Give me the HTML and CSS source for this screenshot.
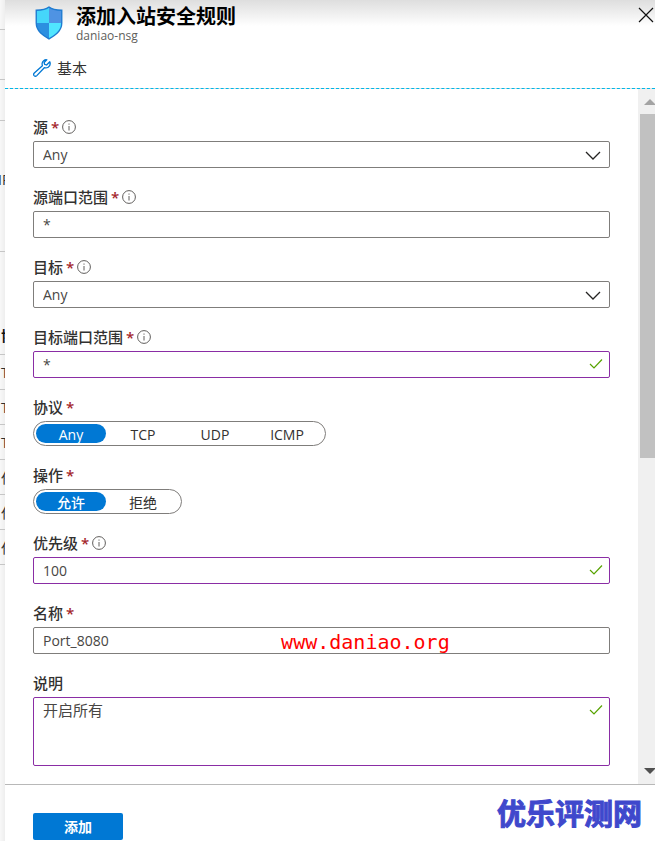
FILE: index.html
```html
<!DOCTYPE html>
<html lang="zh-CN">
<head>
<meta charset="utf-8">
<meta name="viewport" content="width=device-width, initial-scale=1">
<title>添加入站安全规则</title>
<link rel="stylesheet" href="styles.css">
</head>
<body>
<svg class="sprite" aria-hidden="true">
  <symbol id="info" viewBox="0 0 14 14"><circle cx="7" cy="7" r="6.4" fill="none" stroke="#605e5c"/><path d="M7 6v4.5M7 3.5v1.2" stroke="#605e5c" fill="none"/></symbol>
  <symbol id="chevron" viewBox="0 0 16 9"><path d="M1 1l7 7 7-7" fill="none" stroke="#252423" stroke-width="1.3"/></symbol>
  <symbol id="check" viewBox="0 0 14 10"><path d="M1 5l4 4 8-8.5" fill="none" stroke="#57a300" stroke-width="1.2"/></symbol>
</svg>
<div class="shell">
  <aside class="behind" aria-hidden="true">
    <div class="line short"></div>
    <div class="line medium"></div>
    <div class="line small"></div>
    <div class="line tall"><span class="clip">IP</span></div>
    <div class="line head"><b>协</b></div>
    <div class="line">T</div>
    <div class="line">T</div>
    <div class="line">T</div>
    <div class="line">任</div>
    <div class="line">任</div>
    <div class="line">任</div>
  </aside>
  <main class="blade">
    <header class="top">
      <div class="heading">
        <svg class="shield" viewBox="0 0 28 32" aria-hidden="true">
          <defs><clipPath id="half"><path d="M14 1c3 2.500 7 3 12 3v12c0 8-7 12-12 15C9 28 2 24 2 16V4c5 0 9-.5 12-3z"/></clipPath></defs>
          <g clip-path="url(#half)"><path fill="#50e6ff" d="M0 0h28v32H0z"/><path fill="#4f93e3" d="M14 0h14v16H14z"/><path fill="#2c8fe0" d="M0 16h14v16H0z"/><path fill="#45d6fa" d="M0 0h14v16H0z"/></g>
          <path d="M14 1c3 2.500 7 3 12 3v12c0 8-7 12-12 15C9 28 2 24 2 16V4c5 0 9-.5 12-3z" fill="none" stroke="#1f7bd1" stroke-width="1.300"/>
        </svg>
        <div class="titles">
          <h1>添加入站安全规则</h1>
          <p>daniao-nsg</p>
        </div>
        <button class="close" type="button" aria-label="关闭"><svg viewBox="0 0 16 16"><path d="M1 1l14 14M15 1L1 15" stroke="#111" stroke-width="1.200"/></svg></button>
      </div>
      <button class="basic" type="button">
        <svg viewBox="0 0 18 18"><path d="M13.800.8c-2.400-.3-4.500 1.400-4.700 3.700 0 .8 0 1.500.3 2.200L1.300 14c-.9.900-.8 1.900-.2 2.600.8.800 1.900.8 2.700 0l7.500-7.900c2.800.9 5.700-.9 5.900-3.800 0-.8-.1-1.500-.4-2.100l-3.200 3.200-2-.6-.5-1.900z" fill="none" stroke="#0078d4" stroke-width="1.300" stroke-linejoin="round"/></svg>
        基本
      </button>
    </header>
    <div class="middle">
      <form class="form" id="rule">
        <div class="field">
          <div class="label"><label for="source">源</label><i>*</i><svg><use href="#info"/></svg></div>
          <div class="control"><select id="source"><option>Any</option></select><svg class="chevron"><use href="#chevron"/></svg></div>
        </div>
        <div class="field">
          <div class="label"><label for="sport">源端口范围</label><i>*</i><svg><use href="#info"/></svg></div>
          <div class="control"><input id="sport" type="text" value="*"></div>
        </div>
        <div class="field">
          <div class="label"><label for="dest">目标</label><i>*</i><svg><use href="#info"/></svg></div>
          <div class="control"><select id="dest"><option>Any</option></select><svg class="chevron"><use href="#chevron"/></svg></div>
        </div>
        <div class="field">
          <div class="label"><label for="dport">目标端口范围</label><i>*</i><svg><use href="#info"/></svg></div>
          <div class="control edited"><input id="dport" type="text" value="*"><svg class="check"><use href="#check"/></svg></div>
        </div>
        <div class="field" role="radiogroup" aria-labelledby="protocol">
          <div class="label"><span id="protocol">协议</span><i>*</i></div>
          <div class="pills">
            <label><input type="radio" name="protocol" checked><span>Any</span></label>
            <label><input type="radio" name="protocol"><span>TCP</span></label>
            <label><input type="radio" name="protocol"><span>UDP</span></label>
            <label><input type="radio" name="protocol"><span>ICMP</span></label>
          </div>
        </div>
        <div class="field" role="radiogroup" aria-labelledby="action">
          <div class="label"><span id="action">操作</span><i>*</i></div>
          <div class="pills">
            <label><input type="radio" name="action" checked><span>允许</span></label>
            <label><input type="radio" name="action"><span>拒绝</span></label>
          </div>
        </div>
        <div class="field">
          <div class="label"><label for="priority">优先级</label><i>*</i><svg><use href="#info"/></svg></div>
          <div class="control edited"><input id="priority" type="text" value="100"><svg class="check"><use href="#check"/></svg></div>
        </div>
        <div class="field">
          <div class="label"><label for="name">名称</label><i>*</i></div>
          <div class="control"><input id="name" type="text" value="Port_8080"><span class="site">www.daniao.org</span></div>
        </div>
        <div class="field">
          <div class="label"><label for="note">说明</label></div>
          <div class="control edited"><textarea id="note">开启所有</textarea><svg class="check"><use href="#check"/></svg></div>
        </div>
      </form>
      <div class="scrollbar" aria-hidden="true">
        <svg viewBox="0 0 12 6"><path d="M0 6l6-6 6 6z" fill="#a3a3a3"/></svg>
        <div class="thumb"></div>
        <svg viewBox="0 0 12 6"><path d="M0 0l6 6 6-6z" fill="#505050"/></svg>
      </div>
    </div>
    <footer class="bottom">
      <button class="add" type="submit" form="rule">添加</button>
      <strong class="brand">优乐评测网</strong>
    </footer>
  </main>
</div>
</body>
</html>
```
FILE: styles.css
```css
* { box-sizing: border-box; }

body {
  margin: 0;
  font: 14px/20px "Open Sans", "Noto Sans CJK SC", sans-serif;
  color: #323130;
  background: #fff;
}

button, input, select, textarea { font: inherit; color: inherit; }

.sprite { position: absolute; width: 0; height: 0; }

.shell { display: flex; height: 100vh; min-height: 600px; overflow: hidden; }

/* Edge of the page that lies under the blade */
.behind {
  flex: 0 0 5px;
  overflow: hidden;
  background: linear-gradient(90deg, #f8f8f8, #eee);
}
.line {
  height: 35px;
  padding: 8px 0 0 1px;
  border-bottom: 1px solid #c6c6c6;
  white-space: nowrap;
  overflow: hidden;
}
.short { height: 30px; }
.medium { height: 50px; }
.small { height: 41px; }
.tall { height: 131px; padding: 49px 0 0; }
.head { height: 103px; padding-top: 74px; color: #111; }
.clip { margin-left: -2px; }

.blade { flex: 1; min-width: 0; display: flex; flex-direction: column; }

.top {
  height: 89px;
  border-bottom: 1px dashed #00b7e8;
  background: linear-gradient(#dedede, #fff 26px);
}
.heading { display: flex; height: 54px; padding: 6px 0 0 29px; }
.shield { width: 30px; height: 34px; }
.titles { flex: 1; padding-left: 12px; }
h1 { margin: 0; font-size: 20px; line-height: 22px; color: #000; }
.titles p { margin: 0; font-size: 12px; line-height: 16px; color: #605e5c; }
.close { align-self: flex-start; width: 17px; height: 18px; padding: 0; border: 0; background: none; }
.close svg { display: block; width: 16px; height: 16px; }
.basic {
  display: flex;
  align-items: center;
  gap: 6px;
  height: 28px;
  padding: 0 0 0 28px;
  border: 0;
  background: none;
  font-size: 15px;
}
.basic svg { width: 18px; height: 18px; }

.middle { flex: 1; min-height: 0; display: flex; }
.form { flex: 1; min-width: 0; padding: 28px 28px 0; overflow: hidden; }
.field { margin-bottom: 19px; }
.label {
  display: flex;
  align-items: center;
  height: 20px;
  margin-bottom: 4px;
  font-size: 15px;
  line-height: 18px;
  font-weight: 500;
}
.label i { margin-left: 3px; color: #a4262c; font-style: normal; font-weight: 600; }
.label svg { width: 14px; height: 14px; margin-left: 3px; }

.control { position: relative; }
.control input, .control select, .control textarea {
  display: block;
  width: 100%;
  height: 27px;
  padding: 0 9px;
  border: 1px solid #7f7d7b;
  border-radius: 2px;
  background: #fff;
  color: #484644;
  appearance: none;
  outline: 0;
}
.control textarea { height: 69px; padding-top: 2px; font-size: 15px; resize: none; }
.control.edited input, .control.edited textarea { border-color: #8a2da5; }
.chevron { position: absolute; top: 10px; right: 9px; width: 16px; height: 9px; }
.check { position: absolute; top: 8px; right: 7px; width: 14px; height: 10px; }
.site {
  position: absolute;
  top: 4px;
  left: 43%;
  font: 20px/22px "DejaVu Sans Mono", monospace;
  color: #f00;
}

.pills {
  display: inline-flex;
  height: 25px;
  padding: 2px 2px 2px 1px;
  border: 1px solid #7f7d7b;
  border-radius: 13px;
  vertical-align: top;
}
.pills label { width: 72px; padding: 0 1px; }
.pills input { position: absolute; opacity: 0; margin: 0; }
.pills span {
  display: block;
  height: 19px;
  border-radius: 10px;
  line-height: 22px;
  text-align: center;
}
.pills input:checked + span { background: #0078d4; color: #fff; font-weight: 500; }

.scrollbar {
  flex: 0 0 17px;
  display: flex;
  flex-direction: column;
  align-items: flex-start;
  padding: 10px 0 10px 2px;
  overflow: hidden;
  background: #f0f0f0;
}
.scrollbar svg { flex: none; width: 12px; height: 6px; margin-left: 4px; }
.thumb { width: 100%; height: 51%; margin: 9px 0 auto; background: #c1c1c1; }

.bottom {
  display: flex;
  justify-content: space-between;
  align-items: flex-start;
  height: 57px;
  padding: 0 13px 0 28px;
  border-top: 1px solid #b8b8b8;
}
.add {
  width: 90px;
  height: 27px;
  margin-top: 28px;
  padding: 0;
  border: 0;
  border-radius: 2px;
  background: #0078d4;
  color: #fff;
  font-weight: 700;
}
.brand { margin-top: 9px; font-size: 29px; line-height: 40px; color: #3f48cc; -webkit-text-stroke: 1px #3f48cc; }
```
